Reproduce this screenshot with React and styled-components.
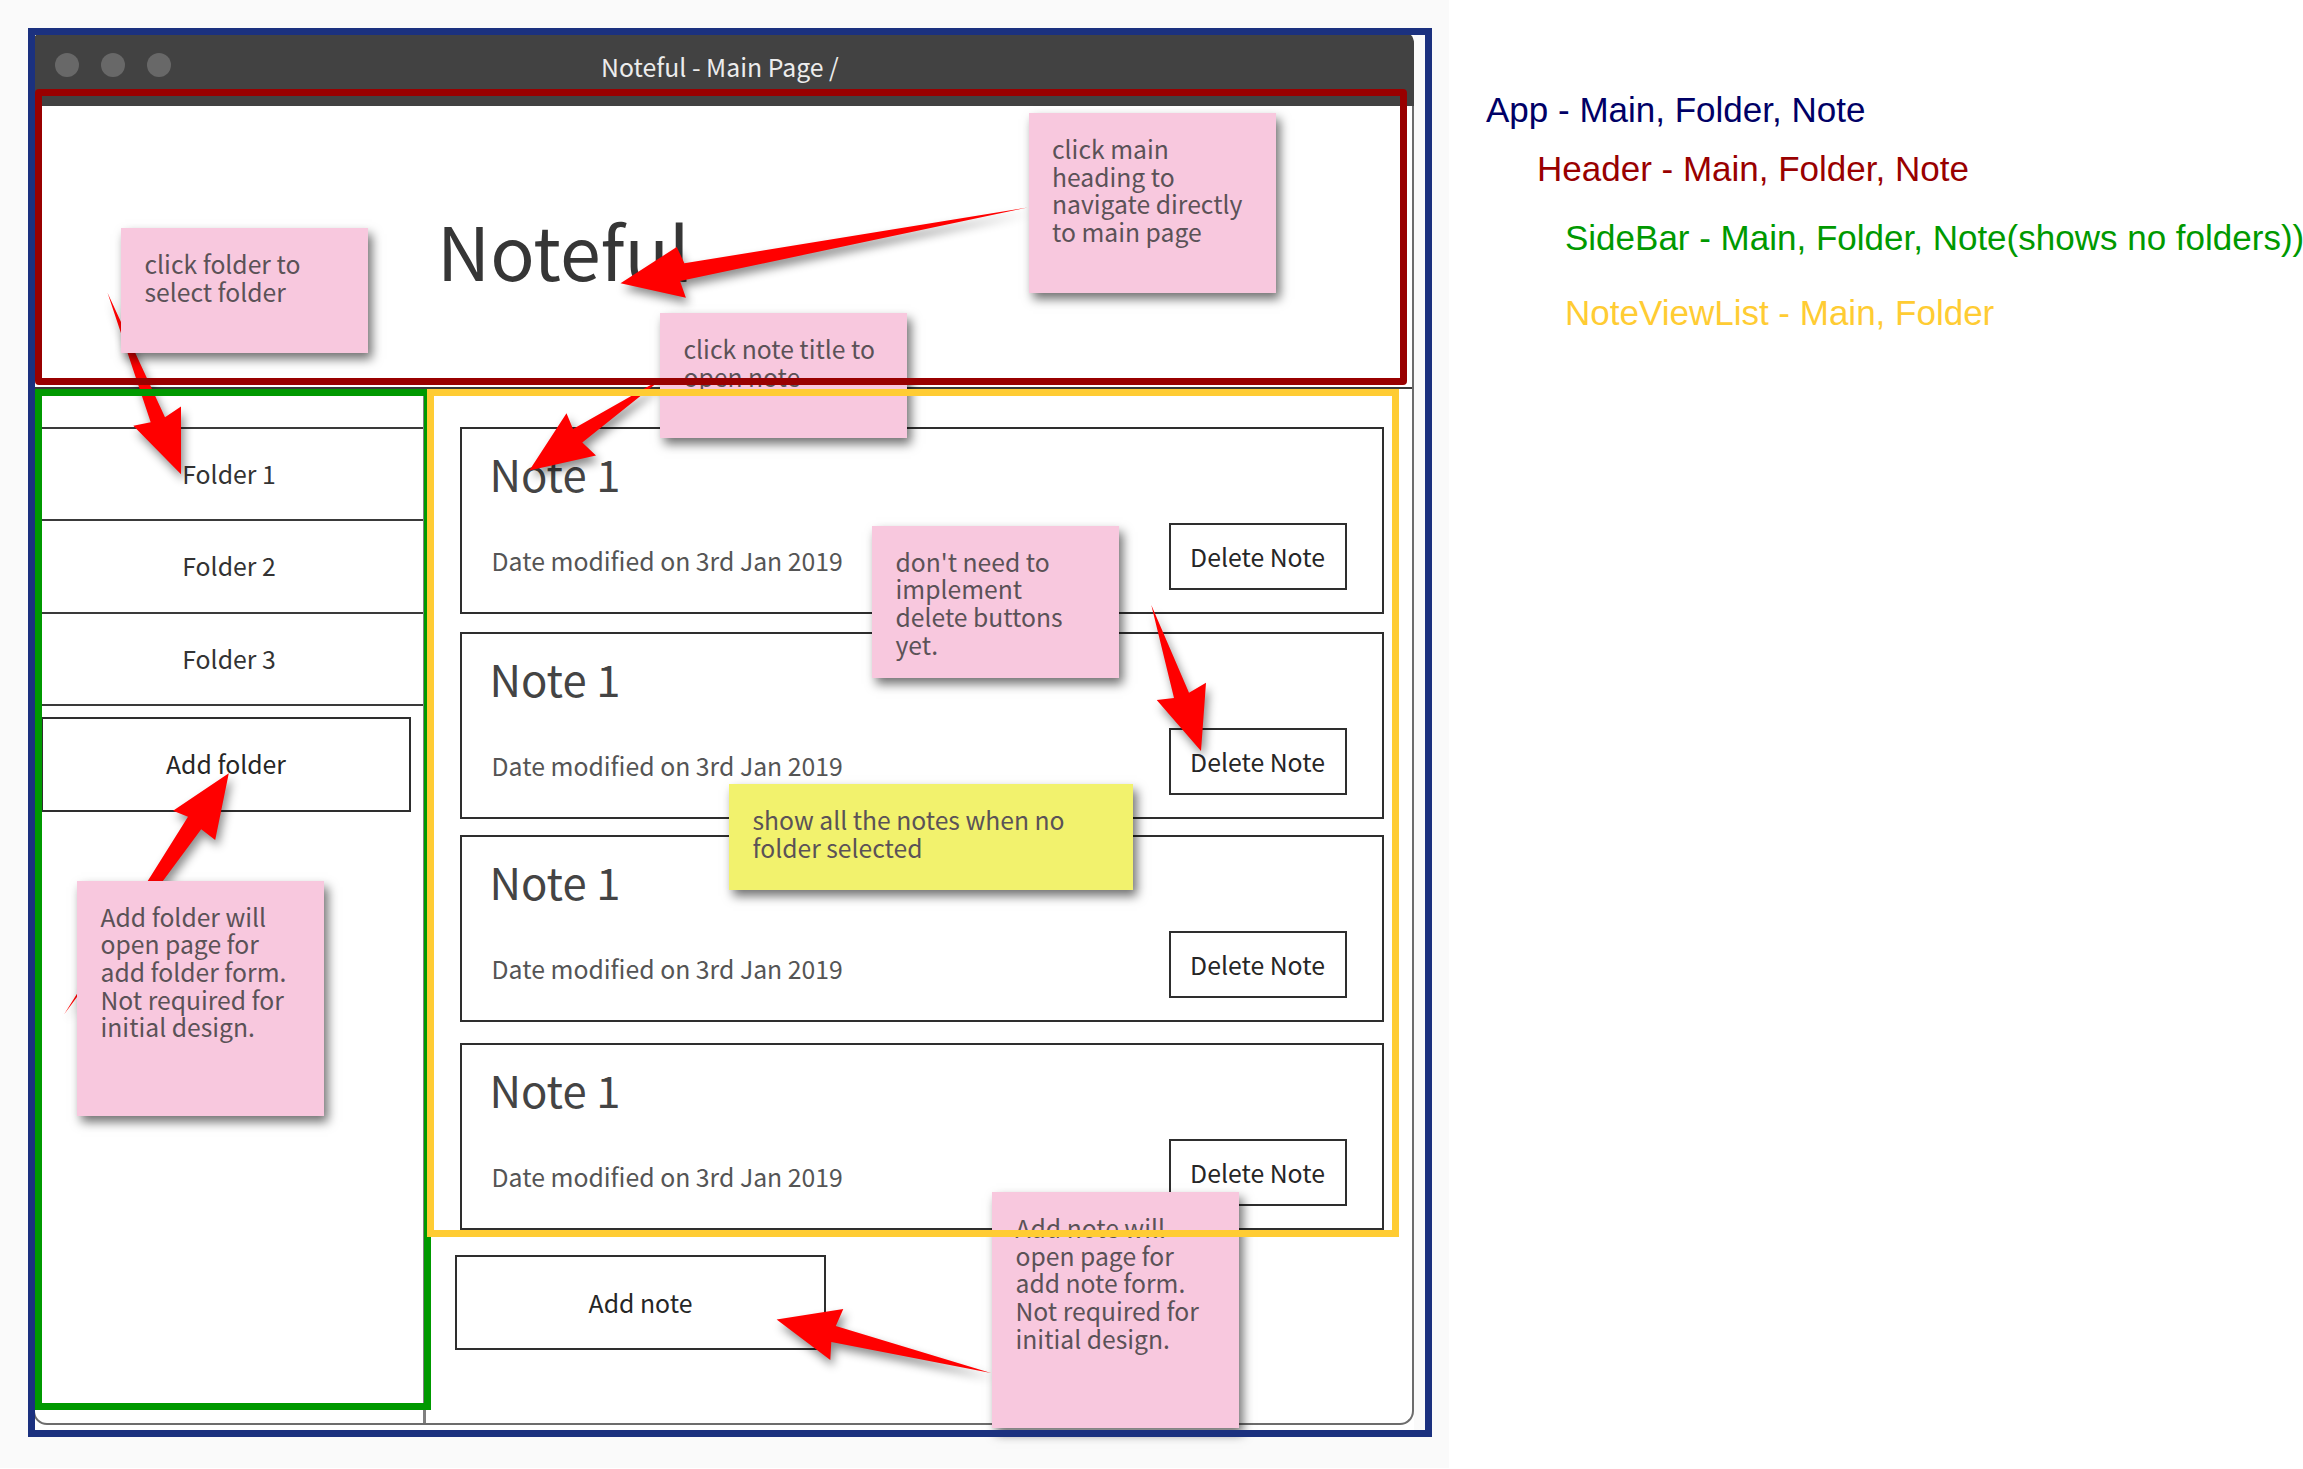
import React from 'react';
import styled, { createGlobalStyle } from 'styled-components';

const GlobalStyle = createGlobalStyle`
  *, *::before, *::after { box-sizing: border-box; }
  html, body { margin: 0; padding: 0; overflow: hidden; background: #ffffff; }
  h1, h2, p, ul { margin: 0; padding: 0; font-weight: 400; }
`;

const ink = '#3a3a3a';
const mockFont = '"Noto Sans CJK SC", "Noto Sans CJK JP", "Noto Sans", sans-serif';

const Page = styled.div`
  display: flex;
  width: 2303px;
  height: 1469px;
  overflow: hidden;
`;

const Board = styled.section`
  position: relative;
  flex: none;
  width: 1449px;
  height: 1468px;
  padding: 31px 0 0 33px;
  background: #fafafa;
  font-family: ${mockFont};
  font-size: 24.8px;
  line-height: 36px;
`;

const Paper = styled.div`
  width: 1381px;
  height: 1401px;
  background: #fff;
`;

const Window = styled.div`
  display: flex;
  flex-direction: column;
  height: 1394px;
`;

const TitleBar = styled.header`
  display: flex;
  flex: none;
  align-items: flex-start;
  height: 75px;
  padding: 17px 0 0 22px;
  border-radius: 12px 12px 0 0;
  background: #424242;
  color: #ececec;
`;

const Lights = styled.div`
  display: flex;
  gap: 22px;
  margin: 5px 430px 0 0;
`;

const Light = styled.span`
  width: 24px;
  height: 24px;
  border-radius: 50%;
  background: #686868;
`;

const Body = styled.div`
  display: flex;
  flex: 1;
  flex-direction: column;
  border: 2px solid #6c6c6c;
  border-top: 0;
  border-radius: 0 0 14px 14px;
`;

const Banner = styled.div`
  flex: none;
  height: 283px;
  padding: 103px 0 0 402px;
  border-bottom: 2px solid ${ink};
`;

const Heading = styled.h1`
  color: #363636;
  font-size: 73.5px;
  line-height: 80px;
`;

const Columns = styled.div`
  display: flex;
  flex: 1;
`;

const SideBar = styled.nav`
  flex: none;
  width: 391px;
  padding-top: 38px;
  border-right: 3px solid #808080;
`;

const FolderList = styled.ul`
  border-bottom: 2px solid ${ink};
  list-style: none;
`;

const FolderRow = styled.li`
  display: flex;
  align-items: center;
  justify-content: center;
  height: 92.25px;
  padding-bottom: 2px;
  border-top: 2px solid ${ink};
  color: #333;
`;

const Button = styled.button`
  display: flex;
  flex: none;
  align-items: center;
  justify-content: center;
  width: ${(p) => p.$width}px;
  height: ${(p) => p.$height}px;
  padding: 0 0 2px;
  border: 2px solid #2e2e2e;
  background: #fff;
  color: #262626;
  font: inherit;
`;

const AddFolder = styled(Button)`
  margin: 11px 0 0 6px;
`;

const NoteArea = styled.main`
  flex: 1;
  padding: 38px 27px 0 34px;
`;

const NoteCard = styled.article`
  display: flex;
  justify-content: space-between;
  width: 924px;
  height: 187px;
  margin-bottom: ${(p) => p.$after}px;
  padding: 14px 35px 0 27.5px;
  border: 2px solid #2e2e2e;
`;

const NoteTitle = styled.h2`
  color: #444;
  font-size: 43.6px;
  line-height: 60px;
`;

const Modified = styled.p`
  margin: 39px 0 0 2px;
  color: #555;
`;

const DeleteButton = styled(Button)`
  margin-top: 80px;
  padding-right: 1px;
`;

const AddNote = styled(Button)`
  margin-left: -5px;
`;

/* Annotations that float over the wireframe */

const Arrows = styled.svg`
  position: absolute;
  top: 0;
  left: 0;
  width: 1449px;
  height: 1468px;
  fill: #ff0000;

  polygon { filter: drop-shadow(3px 6px 5px rgba(0, 0, 0, 0.45)); }
`;

const Sticky = styled.aside`
  position: absolute;
  left: ${(p) => p.$x}px;
  top: ${(p) => p.$y}px;
  width: ${(p) => p.$w}px;
  height: ${(p) => p.$h}px;
  padding: 22px 0 0 23.5px;
  background: ${(p) => (p.$tone === 'yellow' ? '#f2f26d' : '#f8c8de')};
  box-shadow: 4px 6px 10px rgba(0, 0, 0, 0.56);
  color: #5b5257;
  font-size: 24.7px;
  line-height: 27.7px;
  white-space: pre-line;
`;

const Outline = styled.div`
  position: absolute;
  left: ${(p) => p.$x}px;
  top: ${(p) => p.$y}px;
  width: ${(p) => p.$w}px;
  height: ${(p) => p.$h}px;
  border: 7px solid ${(p) => p.$color};
  border-radius: ${(p) => p.$radius || 0}px;
`;

const Legend = styled.aside`
  flex: none;
  width: 854px;
  padding: 90px 0 0 37px;
  overflow: hidden;
  font: 35px/40px "Liberation Sans", Arial, sans-serif;
  white-space: nowrap;
`;

const LegendLine = styled.p`
  margin: 0 0 ${(p) => p.$after}px ${(p) => p.$indent}px;
  color: ${(p) => p.$color};
`;

const folders = ['Folder 1', 'Folder 2', 'Folder 3'];
const noteGaps = [18, 16, 21, 25];

const arrows = [
  '107.6,293 165,417.3 181,406.5 181,474.3 133.3,425.7 150.7,422.3',
  '1027.5,207.5 684.4,263.3 676.7,247 620.5,283.3 685.9,297.7 680,281',
  '663,378 573,429 566.5,413.3 529.3,470.5 596,455.5 582.3,442.5',
  '1151.3,605 1189,692.7 1206,682.7 1201,751 1156.7,700 1174,698',
  '64,1014.5 188,816.7 173,810.7 228.8,773.3 215.2,840 201.2,829.3',
  '991,1373 835.8,1326 843.3,1309 776.6,1319.5 830.3,1360 831.3,1342',
];

const stickies = [
  { x: 121, y: 228, w: 247, h: 124.5, text: 'click folder to\nselect folder' },
  { x: 1028.5, y: 113, w: 247, h: 179.5, text: 'click main\nheading to\nnavigate directly\nto main page' },
  { x: 660, y: 313, w: 247, h: 124.5, text: 'click note title to\nopen note' },
  { x: 872, y: 525.5, w: 246.5, h: 152, text: "don't need to\nimplement\ndelete buttons\nyet." },
  { x: 729, y: 784, w: 403.5, h: 106, tone: 'yellow', text: 'show all the notes when no\nfolder selected' },
  { x: 77, y: 880.5, w: 247, h: 235.5, text: 'Add folder will\nopen page for\nadd folder form.\nNot required for\ninitial design.' },
  { x: 992, y: 1192, w: 247, h: 235.5, text: 'Add note will\nopen page for\nadd note form.\nNot required for\ninitial design.' },
];

export default function App() {
  return (
    <Page>
      <GlobalStyle />
      <Board>
        <Paper>
          <Window>
            <TitleBar>
              <Lights>
                <Light />
                <Light />
                <Light />
              </Lights>
              Noteful - Main Page /
            </TitleBar>
            <Body>
              <Banner>
                <Heading>Noteful</Heading>
              </Banner>
              <Columns>
                <SideBar>
                  <FolderList>
                    {folders.map((name) => (
                      <FolderRow key={name}>{name}</FolderRow>
                    ))}
                  </FolderList>
                  <AddFolder $width={370} $height={95}>Add folder</AddFolder>
                </SideBar>
                <NoteArea>
                  {noteGaps.map((gap, i) => (
                    <NoteCard key={i} $after={gap}>
                      <div>
                        <NoteTitle>Note 1</NoteTitle>
                        <Modified>Date modified on 3rd Jan 2019</Modified>
                      </div>
                      <DeleteButton $width={178} $height={67}>Delete Note</DeleteButton>
                    </NoteCard>
                  ))}
                  <AddNote $width={371} $height={95}>Add note</AddNote>
                </NoteArea>
              </Columns>
            </Body>
          </Window>
        </Paper>

        <Arrows viewBox="0 0 1449 1468">
          {arrows.map((points) => (
            <polygon key={points} points={points} />
          ))}
        </Arrows>
        {stickies.map((s) => (
          <Sticky key={s.text} $x={s.x} $y={s.y} $w={s.w} $h={s.h} $tone={s.tone}>
            {s.text}
          </Sticky>
        ))}
        <Outline $x={28} $y={28} $w={1404} $h={1409} $color="#1b317f" />
        <Outline $x={35} $y={89} $w={1372} $h={296} $color="#990000" $radius={4} />
        <Outline $x={35} $y={389} $w={396} $h={1021} $color="#009900" />
        <Outline $x={427} $y={389} $w={972} $h={848} $color="#ffcc33" />
      </Board>
      <Legend>
        <LegendLine $indent={0} $after={19} $color="#000066">App - Main, Folder, Note</LegendLine>
        <LegendLine $indent={51} $after={29} $color="#990000">Header - Main, Folder, Note</LegendLine>
        <LegendLine $indent={79} $after={35} $color="#009900">SideBar - Main, Folder, Note(shows no folders))</LegendLine>
        <LegendLine $indent={79} $after={0} $color="#ffcc33">NoteViewList - Main, Folder</LegendLine>
      </Legend>
    </Page>
  );
}
